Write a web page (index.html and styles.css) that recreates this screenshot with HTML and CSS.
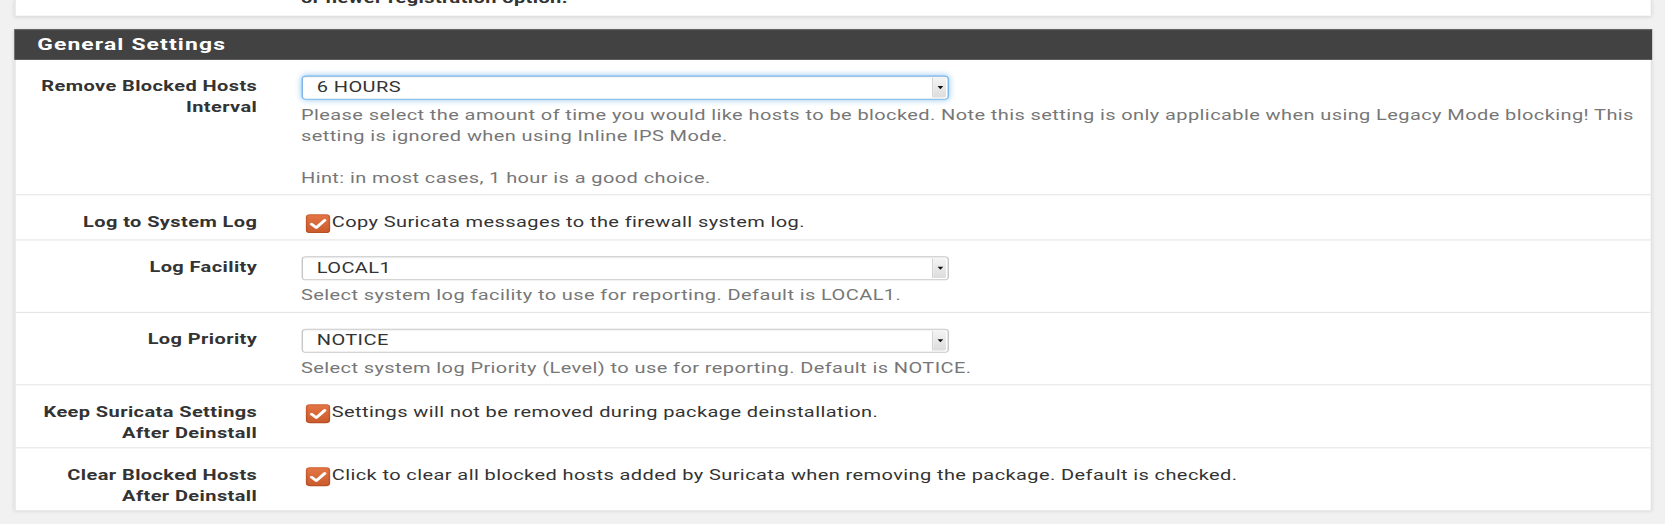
FILE: index.html
```html
<!DOCTYPE html>
<html lang="en">
<head>
<meta charset="utf-8">
<title>Suricata Global Settings</title>
<link rel="stylesheet" href="styles.css">
</head>
<body>
<div class="page">
  <div class="panel panel-top">
    <div class="form-row form-row-top">
      <div class="label"></div>
      <div class="value"><p class="cut">or newer registration option.</p></div>
    </div>
  </div>

  <div class="panel">
    <div class="panel-heading"><h2 class="panel-title">General Settings</h2></div>
    <div class="panel-body">
      <div class="form-row">
        <div class="label">Remove Blocked Hosts Interval</div>
        <div class="value">
          <div class="select focused"><span class="select-text">6 HOURS</span><span class="select-arrow"><span class="caret"></span></span></div>
          <p class="help">Please select the amount of time you would like hosts to be blocked. Note this setting is only applicable when using Legacy Mode blocking! This setting is ignored when using Inline IPS Mode.<br><br>Hint: in most cases, 1 hour is a good choice.</p>
        </div>
      </div>

      <div class="form-row">
        <div class="label">Log to System Log</div>
        <div class="value">
          <label class="check"><span class="box"><svg viewBox="0 0 17 18" width="17" height="18"><path d="M4 9.5 L7.3 12.8 L13.2 5.8" fill="none" stroke="#fff" stroke-width="2.4" stroke-linecap="round" stroke-linejoin="round"/></svg></span><span class="check-text">Copy Suricata messages to the firewall system log.</span></label>
        </div>
      </div>

      <div class="form-row">
        <div class="label">Log Facility</div>
        <div class="value">
          <div class="select"><span class="select-text">LOCAL1</span><span class="select-arrow"><span class="caret"></span></span></div>
          <p class="help">Select system log facility to use for reporting. Default is LOCAL1.</p>
        </div>
      </div>

      <div class="form-row">
        <div class="label">Log Priority</div>
        <div class="value">
          <div class="select"><span class="select-text">NOTICE</span><span class="select-arrow"><span class="caret"></span></span></div>
          <p class="help">Select system log Priority (Level) to use for reporting. Default is NOTICE.</p>
        </div>
      </div>

      <div class="form-row two-line">
        <div class="label">Keep Suricata Settings After Deinstall</div>
        <div class="value">
          <label class="check"><span class="box"><svg viewBox="0 0 17 18" width="17" height="18"><path d="M4 9.5 L7.3 12.8 L13.2 5.8" fill="none" stroke="#fff" stroke-width="2.4" stroke-linecap="round" stroke-linejoin="round"/></svg></span><span class="check-text">Settings will not be removed during package deinstallation.</span></label>
        </div>
      </div>

      <div class="form-row two-line last">
        <div class="label">Clear Blocked Hosts After Deinstall</div>
        <div class="value">
          <label class="check"><span class="box"><svg viewBox="0 0 17 18" width="17" height="18"><path d="M4 9.5 L7.3 12.8 L13.2 5.8" fill="none" stroke="#fff" stroke-width="2.4" stroke-linecap="round" stroke-linejoin="round"/></svg></span><span class="check-text">Click to clear all blocked hosts added by Suricata when removing the package. Default is checked.</span></label>
        </div>
      </div>
    </div>
  </div>
</div>
</body>
</html>
```

FILE: styles.css
```css
html {
  background: #f1f1f1;
  overflow: hidden;
}

body {
  margin: 0;
  padding: 0;
  min-height: 524px;
  background: #f1f1f1;
}

/* The captured page is a 1165x499 layout stretched to the window */
.page {
  width: 1165px;
  height: 499px;
  transform: scale(1.4292, 1.05);
  transform-origin: 0 0;
  font-family: Roboto, "Liberation Sans", Arial, sans-serif;
  font-size: 14px;
  line-height: 20px;
  letter-spacing: 0.28px;
  color: #333;
}

.panel {
  margin: 0 9px 0 10px;
  background: #fff;
  border-left: 1px solid #e2e2e2;
  border-right: 1px solid #e2e2e2;
  box-shadow: 0 1px 3px rgba(0, 0, 0, 0.12);
}

.panel-heading {
  background: #424242;
  padding: 5px 16px;
  border-top: 1px solid #4e4e4e;
  margin: 0 -1px;
  height: 18px;
  box-sizing: content-box;
}

.panel-title {
  margin: 0;
  color: #fff;
  font-size: 16px;
  line-height: 17px;
  font-weight: bold;
  letter-spacing: 0.8px;
}

.form-row {
  display: grid;
  grid-template-columns: 156px 1fr;
  column-gap: 30.6px;
  padding: 15px 4px 6px 13px;
  border-bottom: 1px solid #e4e4e4;
}

.form-row.two-line {
  padding-bottom: 4px;
}

.form-row.last {
  border-bottom: 0;
  padding-bottom: 4px;
}

.panel-top {
  margin-bottom: 13px;
  overflow: hidden;
  padding-bottom: 7px;
}

.panel-top .form-row-top {
  padding-top: 0;
  padding-bottom: 0;
  border: 0;
}

.cut {
  margin: -12px 0 0;
  font-weight: bold;
  color: #333;
}

.label {
  text-align: right;
  font-weight: bold;
  color: #333;
}

.value {
  min-width: 0;
}

.select {
  display: flex;
  align-items: stretch;
  width: 453.7px;
  height: 23px;
  box-sizing: border-box;
  border: 1px solid #c8c8c8;
  border-radius: 3px;
  background: #fff;
  box-shadow: inset 0 1px 1px rgba(0, 0, 0, 0.06);
}

.select.focused {
  border-color: #7fb7e6;
  box-shadow: inset 0 1px 1px rgba(0, 0, 0, 0.06), 0 0 5px rgba(102, 175, 233, 0.75);
}

.select-text {
  flex: 1;
  padding-left: 10px;
  line-height: 21px;
  color: #333;
}

.select-arrow {
  width: 9px;
  margin: 1px 1px 1px 0;
  background: linear-gradient(#f4f4f4, #dcdcdc);
  border-left: 1px solid #d4d4d4;
  border-radius: 0 2px 2px 0;
  display: flex;
  align-items: center;
  justify-content: center;
}

.caret {
  width: 0;
  height: 0;
  border-left: 2.3px solid transparent;
  border-right: 2.3px solid transparent;
  border-top: 3px solid #111;
}

.help {
  margin: 4px 0 0;
  color: #777;
}

.check {
  display: flex;
  align-items: flex-start;
  min-height: 21px;
}

.box {
  flex: none;
  width: 17px;
  height: 18px;
  margin: 3px 1.5px 0 3px;
  border-radius: 3px;
  background: linear-gradient(#e57747, #c85a2b);
  box-shadow: inset 0 0 0 1px rgba(150, 60, 20, 0.35);
  display: flex;
}

.box svg {
  display: block;
}

.check-text {
  color: #333;
}
```
